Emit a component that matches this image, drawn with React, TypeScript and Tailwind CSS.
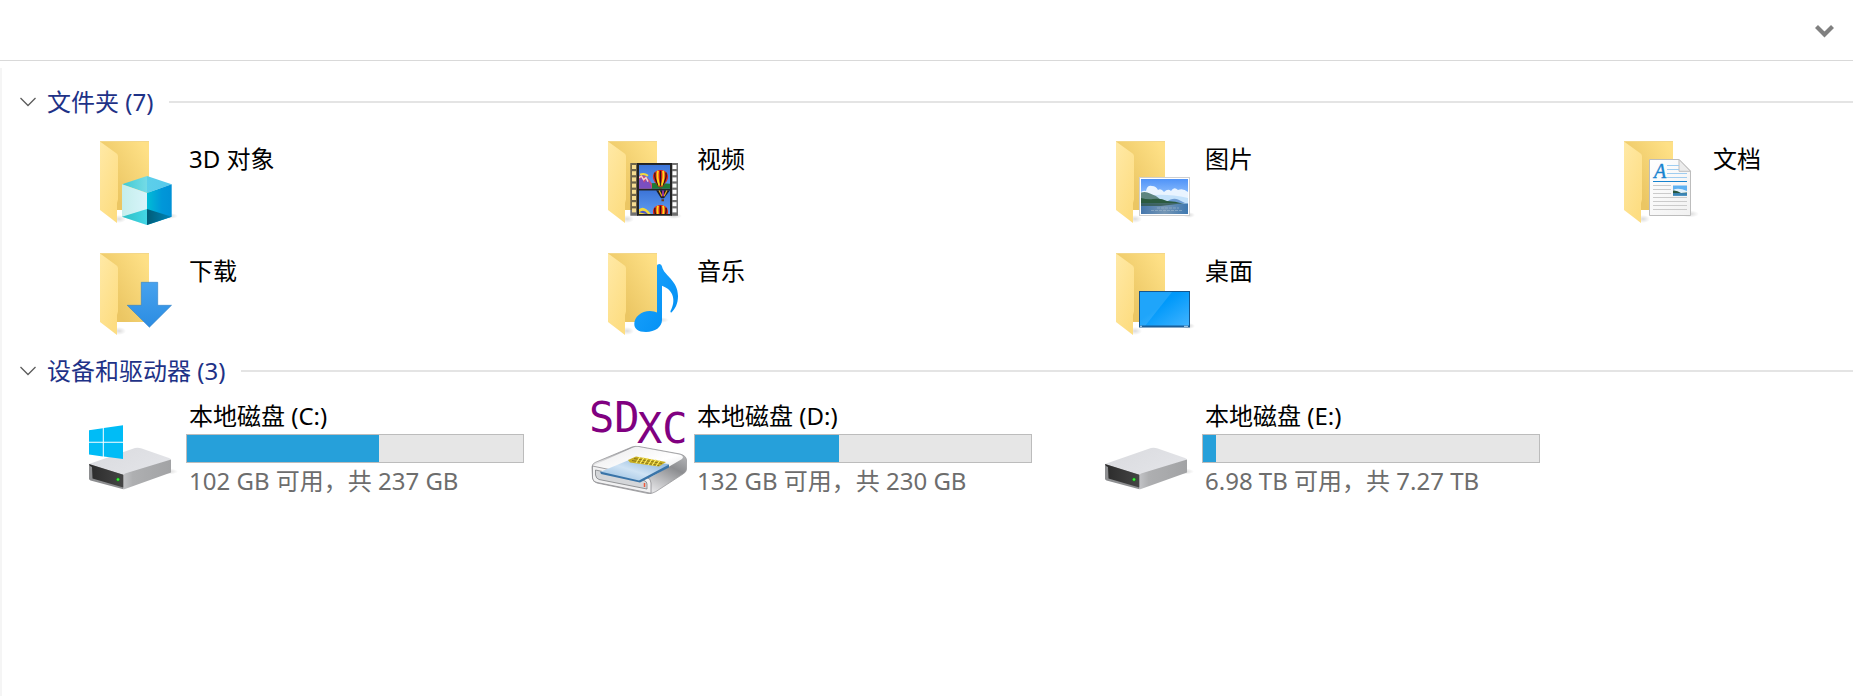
import { ReactNode, useState } from "react";

interface FolderItem {
  name: string;
  overlay: ReactNode;
}

interface DriveItem {
  name: string;
  info: string;
  used: number;
  icon: ReactNode;
}

const Gradients = () => (
  <svg className="absolute size-0" aria-hidden="true">
    <defs>
      <linearGradient id="folder-back" x1="0" y1="1" x2="1" y2="0.2">
        <stop offset="0.3" stopColor="#ebc663" />
        <stop offset="1" stopColor="#fee086" />
      </linearGradient>
      <linearGradient id="folder-flap" x1="0" y1="0" x2="0.6" y2="1">
        <stop offset="0" stopColor="#ffe9a6" />
        <stop offset="1" stopColor="#fddd82" />
      </linearGradient>
      <radialGradient id="shadow">
        <stop offset="0" stopColor="#000" stopOpacity="0.14" />
        <stop offset="1" stopColor="#000" stopOpacity="0" />
      </radialGradient>
      <linearGradient id="cube-top">
        <stop offset="0" stopColor="#3fcad2" />
        <stop offset="0.5" stopColor="#74dbe6" />
        <stop offset="0.51" stopColor="#5ccfea" />
        <stop offset="1" stopColor="#57c9ec" />
      </linearGradient>
      <linearGradient id="cube-left">
        <stop offset="0" stopColor="#c4eeec" />
        <stop offset="1" stopColor="#d8f4fa" />
      </linearGradient>
      <linearGradient id="cube-right">
        <stop offset="0" stopColor="#00bcd6" />
        <stop offset="0.6" stopColor="#0097d9" />
        <stop offset="1" stopColor="#0091d6" />
      </linearGradient>
      <linearGradient id="cube-base">
        <stop offset="0" stopColor="#2cbfc4" />
        <stop offset="1" stopColor="#43d6e6" />
      </linearGradient>
      <linearGradient id="cube-dark">
        <stop offset="0" stopColor="#005c78" />
        <stop offset="1" stopColor="#0085b8" />
      </linearGradient>
      <linearGradient id="film-sky" x1="0" y1="0" x2="0" y2="1">
        <stop offset="0" stopColor="#3c74d8" />
        <stop offset="1" stopColor="#5f9cf0" />
      </linearGradient>
      <linearGradient id="photo-sky" x1="0" y1="0" x2="0" y2="1">
        <stop offset="0" stopColor="#4f93f8" />
        <stop offset="1" stopColor="#b9dcff" />
      </linearGradient>
      <linearGradient id="photo-water">
        <stop offset="0" stopColor="#4677ad" />
        <stop offset="0.5" stopColor="#7596b4" />
        <stop offset="1" stopColor="#3e78b0" />
      </linearGradient>
      <linearGradient id="page" x1="0" y1="0" x2="1" y2="1">
        <stop offset="0" stopColor="#fff" />
        <stop offset="1" stopColor="#f1f1f1" />
      </linearGradient>
      <linearGradient id="arrow" x1="0" y1="0" x2="0" y2="1">
        <stop offset="0" stopColor="#47a2ee" />
        <stop offset="1" stopColor="#2b8ce2" />
      </linearGradient>
      <linearGradient id="note" x1="0" y1="0" x2="1" y2="1">
        <stop offset="0" stopColor="#1ea6ff" />
        <stop offset="1" stopColor="#008df2" />
      </linearGradient>
      <linearGradient id="screen" x1="0" y1="0" x2="1" y2="1">
        <stop offset="0.4" stopColor="#0099fa" />
        <stop offset="1" stopColor="#43b4ff" />
      </linearGradient>
      <linearGradient id="drive-top" x1="0" y1="0" x2="1" y2="0.6">
        <stop offset="0" stopColor="#d9dade" />
        <stop offset="1" stopColor="#e3e4e8" />
      </linearGradient>
      <linearGradient id="drive-side">
        <stop offset="0" stopColor="#c2c3c6" />
        <stop offset="0.2" stopColor="#aeafb1" />
        <stop offset="1" stopColor="#a2a3a5" />
      </linearGradient>
      <linearGradient id="drive-front">
        <stop offset="0" stopColor="#2b2b2b" />
        <stop offset="1" stopColor="#454545" />
      </linearGradient>
      <linearGradient id="card-top" x1="0" y1="0" x2="1" y2="1">
        <stop offset="0" stopColor="#e9e9ea" />
        <stop offset="0.6" stopColor="#fff" />
        <stop offset="1" stopColor="#d8d9db" />
      </linearGradient>
      <linearGradient id="card-side" x1="0" y1="1" x2="1" y2="0">
        <stop offset="0" stopColor="#8f9093" />
        <stop offset="0.35" stopColor="#e4e4e6" />
        <stop offset="0.7" stopColor="#8c8d90" />
        <stop offset="1" stopColor="#c9cacc" />
      </linearGradient>
      <linearGradient id="card-blue" x1="0" y1="1" x2="1" y2="0">
        <stop offset="0" stopColor="#8bb6dc" />
        <stop offset="0.5" stopColor="#cfe3f4" />
        <stop offset="1" stopColor="#7fabd6" />
      </linearGradient>
    </defs>
  </svg>
);

const Icon = ({ children }: { children: ReactNode }) => (
  <svg
    viewBox="0 0 96 96"
    className="size-24 shrink-0 overflow-visible"
    aria-hidden="true"
  >
    {children}
  </svg>
);

const FolderIcon = ({ children }: { children: ReactNode }) => (
  <Icon>
    <ellipse cx="37" cy="84" rx="7" ry="4" fill="url(#shadow)" />
    <path d="M18 6H67V75H18Z" fill="url(#folder-back)" />
    <path d="M18 6.5H67" stroke="#f3d789" />
    <path d="M18 6.4L34.6 18.5Q36 19.6 36 21.5V64.5L35 68V88L18 75Z" fill="url(#folder-flap)" />
    {children}
  </Icon>
);

const CubeOverlay = () => (
  <g>
    <ellipse cx="88" cy="81" rx="8" ry="3" fill="url(#shadow)" />
    <path d="M65 41L89.7 49.3L65 58L40 49.3Z" fill="url(#cube-top)" />
    <path d="M40 49.3L65 58V90L40 81.7Z" fill="url(#cube-left)" />
    <path d="M89.7 49.3L65 58V90L89.7 81.7Z" fill="url(#cube-right)" />
    <path d="M40 81.7L65 74V90Z" fill="url(#cube-base)" />
    <path d="M89.7 81.7L65 74V90Z" fill="url(#cube-dark)" />
  </g>
);

const Balloon = () => (
  <g>
    <path d="M-7.6 -1C-7.6 -10 7.6 -10 7.6 -1C7.6 3 4 6 2 9H-2C-4 6 -7.6 3 -7.6 -1Z" fill="#e3231c" />
    <path d="M-5.5 -5Q-6.5 1 -2 8M5.5 -5Q6.5 1 2 8" fill="none" stroke="#2b1a14" strokeWidth="1.3" />
    <path d="M-2.6 -7Q-4 0 -1 8M2.6 -7Q4 0 1 8" fill="none" stroke="#ffd91c" strokeWidth="2" />
    <path d="M0 -7V8" stroke="#2b1a14" strokeWidth="1.3" />
    <path d="M-1.3 10.2H1.3V12.2H-1.3Z" fill="#6d3b17" />
  </g>
);

const FilmOverlay = () => (
  <g>
    <ellipse cx="84" cy="81" rx="8" ry="3" fill="url(#shadow)" />
    <path d="M40.3 28H48V80.7H40.3ZM81 28H88V80.7H81Z" fill="#3a3a3a" fillOpacity="0.72" />
    <path d="M47 28H82V80.7H47Z" fill="#222" />
    {[30, 36.2, 42.4, 48.6, 54.8, 61, 67.2, 73.4].map((y) => (
      <g key={y}>
        <rect x="42" y={y} width="4" height="4" fill="#f6dc90" />
        <rect x="82.5" y={y} width="4" height="4" fill="#fff" />
      </g>
    ))}
    <svg x="49" y="29.7" width="31" height="24" viewBox="0 0 31 24">
      <rect width="31" height="24" fill="url(#film-sky)" />
      <path d="M0 20Q10 17 31 19V24H0Z" fill="#1f7a35" />
      <path d="M0 11Q7 9 13 19V24H0Z" fill="#c94b78" />
      <path d="M0 15L3 13L5 18L8 14L12 21V24H0Z" fill="#7a4fc0" />
      <path d="M0 13L2.5 11.5L4.5 15L7 13L9 17" fill="none" stroke="#f0d2d8" strokeWidth="1.5" />
      <path d="M1 10Q5 8 9 11" fill="none" stroke="#f2d83c" strokeWidth="2" />
      <g transform="translate(21.5 13)">
        <Balloon />
      </g>
    </svg>
    <svg x="49" y="55.3" width="31" height="23.7" viewBox="0 0 31 23.7">
      <rect width="31" height="24" fill="url(#film-sky)" />
      <path d="M17 0H31L25 8H22Z" fill="#1c1c22" />
      <path d="M20 0L23 6M28 0L25 6" stroke="#e2a21c" strokeWidth="1.3" />
      <path d="M24 0V6" stroke="#8d2f9c" strokeWidth="2" />
      <path d="M22.5 9H25V11H22.5Z" fill="#6d3b17" />
      <path d="M0 19Q5 14 12 24H0Z" fill="#f2d83c" />
      <path d="M0 22Q5 18 9 24" fill="#4b57c8" />
      <g transform="translate(21.5 22.5)">
        <Balloon />
      </g>
    </svg>
  </g>
);

const PhotoOverlay = () => (
  <g>
    <ellipse cx="91" cy="80" rx="6" ry="3" fill="url(#shadow)" />
    <rect x="41.5" y="42.5" width="50" height="38" fill="#fff" stroke="#cfcfcf" />
    <svg x="43" y="44" width="47" height="35" viewBox="0 0 47 35">
      <rect width="47" height="27" fill="url(#photo-sky)" />
      <path d="M0 13Q3 11 5 12Q6 6 11 7Q15 7 17 11Q20 9 23 13Q27 9 30 12Q33 7 37 11Q42 9 47 13V24H0Z" fill="#e9f4ff" />
      <path d="M0 18Q20 13 47 19V26H0Z" fill="#c4e2fb" />
      <path d="M25 23Q32 18 37 20.5L44 24H25Z" fill="#6d9bd1" />
      <path d="M0 13.5Q5 12 9 14.5Q14 16 19 20L28 24H0Z" fill="#5d8580" />
      <path d="M0 19Q7 21 12 20Q20 19 26 22Q34 22 43 25H0Z" fill="#2b5a3f" />
      <rect y="24.5" width="47" height="10.5" fill="url(#photo-water)" />
      <path d="M0 24.5H40L20 27H0Z" fill="#35594d" fillOpacity="0.8" />
      <path d="M16 29H38M10 31.5H42" stroke="#9fb9cd" strokeWidth="0.6" strokeDasharray="3 1" />
    </svg>
  </g>
);

const DocumentOverlay = () => (
  <g>
    <ellipse cx="84" cy="79" rx="9" ry="3.5" fill="url(#shadow)" />
    <path d="M43.5 24.5H73L84.5 36V80.5H43.5Z" fill="url(#page)" stroke="#bdbdbd" />
    <path d="M73 24.5V36.3H84.5Z" fill="#ececec" stroke="#bdbdbd" />
    <text x="48" y="43" fontFamily="Liberation Serif, serif" fontStyle="italic" fontSize="20" fill="#1783cf" stroke="#1783cf" strokeWidth="0.4">
      A
    </text>
    <path d="M61 30.5H73M61 34.5H73M61 38.5H81M61 42.5H81" stroke="#9fcdf0" />
    <path d="M47 46.5H81" stroke="#1783cf" />
    <path d="M47 50.5H65M47 54.5H65M47 58.5H65M47 62.5H81M47 66.5H81M47 70.5H81M47 74.5H81" stroke="#cbcbcb" />
    <rect x="67" y="50.5" width="14" height="10" fill="#5fb2f2" />
    <path d="M67 55Q72 52 81 56V58H67Z" fill="#e2f1fb" />
    <path d="M67 55.5Q71 55 75 58L81 57.5V58.5H67Z" fill="#27563f" />
    <rect x="67" y="58.3" width="14" height="2.5" fill="#3a84b5" />
  </g>
);

const DownloadOverlay = () => (
  <path
    d="M59.3 35.3H75.7V58.3H89.5L67.4 80.2L45.2 58.3H59.3Z"
    fill="url(#arrow)"
    stroke="#2f7fc6"
    strokeWidth="0.6"
  />
);

const MusicOverlay = () => (
  <g>
    <ellipse cx="70" cy="73" rx="9" ry="3" fill="url(#shadow)" />
    <path
      d="M67 18.5Q67 17 69.5 17Q71.5 17 72 19.5C74 29 88 33 88 49C88 57 85 62 81.5 65.5Q80 65.500 80.5 64C86 54 84 43 72 38.7V73C72 80 65 85 56 85C48 85 44.3 81.5 44.3 77C44.3 70 51 64 60 64Q64.5 64 67 65.5Z"
      fill="url(#note)"
    />
  </g>
);

const DesktopOverlay = () => (
  <g>
    <ellipse cx="91" cy="79" rx="6" ry="3" fill="url(#shadow)" />
    <rect x="41.5" y="44.5" width="50" height="35.5" fill="url(#screen)" stroke="#14568f" />
    <path d="M42 45H74L47 79H42Z" fill="#fff" fillOpacity="0.12" />
    <path d="M42 79.3H91" stroke="#1b5f99" strokeWidth="1.5" />
    <path d="M42 79.3H44M86 79.3H90" stroke="#b9dcf6" />
  </g>
);

const DriveBody = () => (
  <g>
    <ellipse cx="87" cy="73.5" rx="9" ry="3" fill="url(#shadow)" />
    <path d="M7 66L53 50Q56 49.2 59 50.2L87 60Q89 60.7 88.5 62L41.3 77Z" fill="url(#drive-top)" />
    <path d="M41.3 77L43 75.5L89 61.5V74.5L43 91Q42 91.5 41.3 91.3Z" fill="url(#drive-side)" />
    <path d="M7 66L41.3 76.7V91.3L8.5 82.5Q7 82 7 80.5Z" fill="#8d8e90" />
    <path d="M7 66L41.3 76.7V89.5L10.5 80.5L10 69L8 68Z" fill="url(#drive-front)" />
    <circle cx="36" cy="81.5" r="2" fill="#1c7a1c" />
    <circle cx="36" cy="81.5" r="1.3" fill="#3df23d" />
  </g>
);

const SystemDriveIcon = () => (
  <Icon>
    <DriveBody />
    <path
      d="M7 32.2L20.8 30.2V43.7H7ZM21.8 30L41 27.3V43.7H21.8ZM7 44.7H20.8V58.5L7 56.5ZM21.8 44.7H41V61L21.8 58.6Z"
      fill="#00bcf6"
    />
  </Icon>
);

const CardDriveIcon = () => (
  <Icon>
    <path
      d="M2 69Q2 66 5 64.5L42 49Q45 48 49 48.5L90 56Q96 57.5 96.5 62V71Q96.5 74 93 76L66 93.5Q62 96 58 95.5L7 85Q3 84 2.5 80Z"
      fill="url(#card-side)"
      stroke="#9a9b9d"
      strokeWidth="0.8"
    />
    <path d="M3 67.5L43 49.5Q46 48.5 49 49L89 56.5Q95 58 92 61L63 78Q60 79.5 56 79L5 69.5Z" fill="url(#card-top)" />
    <path d="M2.5 68L57 79.5Q61 80.5 61 85V95.3L7 84.5Q3 84 2.5 80Z" fill="#f1f1f2" stroke="#8b8c8f" strokeWidth="0.8" />
    <path d="M5.5 72L54 82.5Q57 83.5 57 86V91L9 81.5Q6 80.5 5.5 77Z" fill="#d4d6d9" stroke="#7e8083" strokeWidth="0.8" />
    <path d="M10 74L39 62L79 66L76 70L50 84Z" fill="url(#card-blue)" />
    <path d="M10 73.5L49 82.5L79 66.5V69.5L50 84.5L11 76Z" fill="#3974a8" />
    <path d="M38 62L46 58.500L76 64L69 68.500L40 64.500Z" fill="#c7ad20" />
    <path d="M44 60.500L72 65.500M42 62.500L69 67.500" stroke="#6b5b1c" strokeWidth="0.7" />
    <path d="M50 59L46 65M54 59.5L50 65.5M58 60L54 66M62 61L58 67M66 61.5L62 67.5M70 62.5L66 68" stroke="#fff06a" strokeWidth="1.2" />
    <path d="M54.5 85V89" stroke="#f0593b" strokeWidth="1.5" />
    <g fontFamily="DejaVu Sans Mono, monospace" fontSize="42" fill="#800080">
      <text x="-1" y="34">SD</text>
      <text x="47" y="45">XC</text>
    </g>
  </Icon>
);

const PlainDriveIcon = () => (
  <Icon>
    <DriveBody />
  </Icon>
);

const folders: FolderItem[] = [
  { name: "3D 对象", overlay: <CubeOverlay /> },
  { name: "视频", overlay: <FilmOverlay /> },
  { name: "图片", overlay: <PhotoOverlay /> },
  { name: "文档", overlay: <DocumentOverlay /> },
  { name: "下载", overlay: <DownloadOverlay /> },
  { name: "音乐", overlay: <MusicOverlay /> },
  { name: "桌面", overlay: <DesktopOverlay /> },
];

const drives: DriveItem[] = [
  { name: "本地磁盘 (C:)", info: "102 GB 可用，共 237 GB", used: 57, icon: <SystemDriveIcon /> },
  { name: "本地磁盘 (D:)", info: "132 GB 可用，共 230 GB", used: 43, icon: <CardDriveIcon /> },
  { name: "本地磁盘 (E:)", info: "6.98 TB 可用，共 7.27 TB", used: 4, icon: <PlainDriveIcon /> },
];

interface SectionProps {
  title: string;
  count: number;
  children: ReactNode;
}

const Section = (props: SectionProps) => {
  const [open, setOpen] = useState(true);

  return (
    <section className="mb-3">
      <h2 className="flex items-center gap-4 pl-[18px]">
        <button
          type="button"
          aria-expanded={open}
          onClick={() => setOpen(!open)}
          className="flex items-center gap-[11px] text-[#1e3287]"
        >
          <svg viewBox="0 0 16 10" className="h-[10px] w-4" aria-hidden="true">
            <path d="M0.5 1L8 8.5L15.5 1" fill="none" stroke="#5c5c5c" strokeWidth="1.3" />
          </svg>
          {props.title} ({props.count})
        </button>
        <span className="h-[2px] grow bg-[#e4e4e4]" />
      </h2>
      {open && props.children}
    </section>
  );
};

const Folder = (props: FolderItem) => (
  <a href="#" className="flex gap-2">
    <FolderIcon>{props.overlay}</FolderIcon>
    <span className="mt-2 pl-[3px]">{props.name}</span>
  </a>
);

const Drive = (props: DriveItem) => (
  <a href="#" className="flex gap-2">
    {props.icon}
    <div className="mt-[2px] w-[338px]">
      <p className="pl-[3px]">{props.name}</p>
      <div
        role="progressbar"
        aria-label={props.name}
        aria-valuenow={props.used}
        className="mt-[2px] h-[29px] border border-[#bcbcbc] bg-[#e6e6e6]"
      >
        <div className="h-full bg-[#26a0da]" style={{ width: `${props.used}%` }} />
      </div>
      <p className="mt-[2px] pl-[3px] text-[#6d6d6d]">{props.info}</p>
    </div>
  </a>
);

const App = () => {
  return (
    <div className="flex min-h-screen flex-col overflow-x-hidden bg-white font-['Noto_Sans','Noto_Sans_CJK_SC',sans-serif] text-[24px] leading-8 text-black">
      <Gradients />
      <header className="flex h-[61px] items-center justify-end border-b border-[#d9d9d9] pt-[3px] pr-[19px]">
        <button type="button" aria-label="展开">
          <svg viewBox="0 0 19 13" className="h-[13px] w-[19px]" aria-hidden="true">
            <path d="M1.5 1.5L9.5 9.5L17.5 1.5" fill="none" stroke="#808080" strokeWidth="4.2" />
          </svg>
        </button>
      </header>
      <main className="mt-[7px] grow border-l-2 border-[#f5f5f5] pt-[18px]">
        <Section title="文件夹" count={7}>
          <div className="grid grid-cols-[repeat(4,508px)] gap-y-4 pt-[17px] pl-20">
            {folders.map((folder) => (
              <Folder key={folder.name} {...folder} />
            ))}
          </div>
        </Section>
        <Section title="设备和驱动器" count={3}>
          <div className="grid grid-cols-[repeat(4,508px)] gap-y-4 pt-[11px] pl-20">
            {drives.map((drive) => (
              <Drive key={drive.name} {...drive} />
            ))}
          </div>
        </Section>
      </main>
    </div>
  );
};

export default App;
